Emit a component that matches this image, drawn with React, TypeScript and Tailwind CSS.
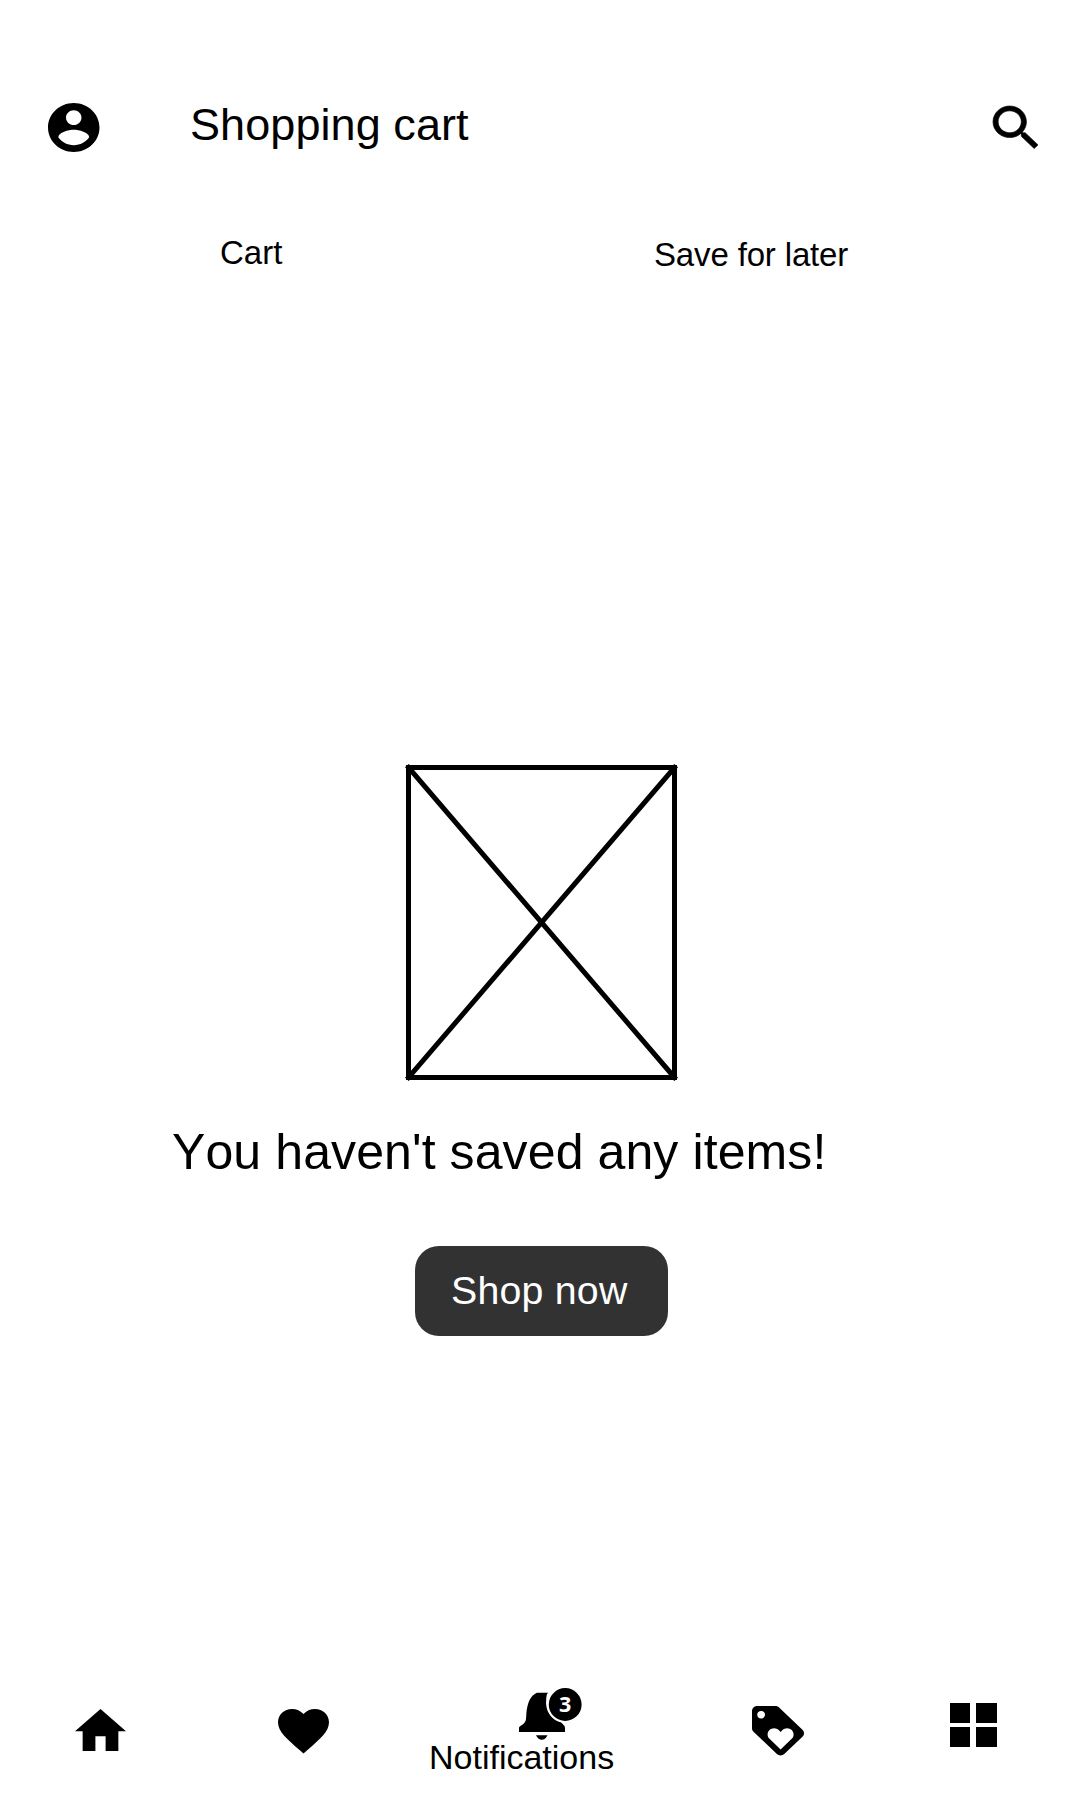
import React from "react";

type GlyphProps = {
  label: string;
  className: string;
  viewBox: string;
  children: React.ReactNode;
};

function Glyph({ label, className, viewBox, children }: GlyphProps) {
  return (
    <svg
      role="img"
      aria-label={label}
      className={`block shrink-0 overflow-visible fill-black ${className}`}
      viewBox={viewBox}
      preserveAspectRatio="none"
    >
      {children}
    </svg>
  );
}

function Header() {
  return (
    <header className="flex h-[190px] shrink-0 items-start pl-12">
      <Glyph label="Account" className="mt-[103px] h-[49px] w-[51.5px]" viewBox="2 2 20 20">
        <path d="M12 2C6.48 2 2 6.48 2 12s4.48 10 10 10 10-4.48 10-10S17.52 2 12 2zm0 3c1.66 0 3 1.34 3 3s-1.34 3-3 3-3-1.34-3-3 1.34-3 3-3zm0 14.2c-2.5 0-4.71-1.28-6-3.22.03-1.99 4-3.08 6-3.08 1.99 0 5.97 1.09 6 3.08-1.29 1.94-3.5 3.22-6 3.22z" />
      </Glyph>
      <h1 className="mt-[100px] ml-[90.5px] text-[45px] leading-[50px] tracking-[0.07px] whitespace-nowrap">Shopping cart</h1>
      <Glyph label="Search" className="mt-[106px] mr-[42px] ml-auto h-[42.5px] w-[45px]" viewBox="3 3 17.49 17.49">
        <path
          stroke="black"
          strokeWidth="0.25"
          d="M15.5 14h-.79l-.28-.27C15.41 12.59 16 11.11 16 9.5 16 5.91 13.09 3 9.5 3S3 5.91 3 9.5 5.91 16 9.5 16c1.61 0 3.09-.59 4.23-1.57l.27.28v.79l5 4.99L20.49 19l-4.99-5zm-6 0C7.01 14 5 11.99 5 9.5S7.01 5 9.5 5 14 7.01 14 9.5 11.99 14 9.5 14z"
        />
      </Glyph>
    </header>
  );
}

function Tabs() {
  return (
    <nav className="flex h-[110px] shrink-0 items-start pt-[43px] pl-[220px] text-[33px] leading-[40px] whitespace-nowrap">
      <button className="w-[434px] text-left">Cart</button>
      <button className="mt-0.5 tracking-[-0.15px]">Save for later</button>
    </nav>
  );
}

function EmptyState() {
  return (
    <main className="flex h-[1390px] shrink-0 flex-col items-start">
      <svg className="mt-[464px] ml-[405px] block h-[317px] w-[273px]" viewBox="0 0 273 317" fill="none" stroke="black" strokeWidth="5">
        <rect x="3.5" y="3.5" width="266" height="310" />
        <path d="M3.5 3.5 269.5 313.5M269.5 3.5 3.5 313.5" strokeWidth="5" strokeLinecap="square" />
      </svg>
      <p className="mt-[41px] ml-[172px] text-[50px] leading-[60px] tracking-[0.1px] whitespace-nowrap [font-kerning:none]">
        You haven't saved any items!
      </p>
      <button className="mt-[64px] ml-[415px] h-[90px] w-[253px] rounded-[24px] bg-[#323232] pb-0.5 pl-9 text-left text-[39.3px] tracking-[0.22px] whitespace-nowrap text-white">
        Shop now
      </button>
    </main>
  );
}

function BottomBar() {
  return (
    <footer className="flex h-[110px] shrink-0 items-start pl-[75px]">
      <Glyph label="Home" className="mt-[19px] h-[42px] w-[51px]" viewBox="2 3 20 17">
        <path d="M10 20v-6h4v6h5v-8h3L12 3 2 12h3v8z" />
      </Glyph>
      <Glyph label="Favorites" className="mt-[19px] ml-[152px] h-[44.5px] w-[51px]" viewBox="2 3 20 18.35">
        <path d="m12 21.35-1.45-1.32C5.4 15.36 2 12.28 2 8.5 2 5.42 4.42 3 7.5 3c1.74 0 3.41.81 4.5 2.09C13.09 3.81 14.76 3 16.5 3 19.58 3 22 5.42 22 8.5c0 3.78-3.4 6.86-8.55 11.54L12 21.35z" />
      </Glyph>
      <div className="ml-[100px] flex w-[185px] flex-col">
        <svg role="img" aria-label="3 notifications" className="mt-[-2px] ml-[89px] block h-[52px] w-[64px]" viewBox="517.500 1688 64 52">
          <path d="M518.500 1732v-4.500c1-2.500 6.500-3 7-8.500.5-5 .2-8 1.500-13 2-8 5.500-11.500 9.500-13.200h11c-1.800 2-1.500 4-1.800 6.500-1.500 12 5.800 20.500 14.500 22.700 2 2.500 4.300 3 4.300 6.500v3.500z" />
          <path d="M535.500 1735.200h11.500c-1.500 3-3.500 4.500-5.700 4.500s-4.300-1.500-5.800-4.500z" />
          <circle cx="564.700" cy="1704.500" r="18.300" fill="white" />
          <circle cx="564.700" cy="1704.500" r="16.400" />
          <text x="564.700" y="1712" textAnchor="middle" fontSize="21.500" fontWeight="bold" fontFamily="Open Sans, sans-serif" fill="white">3</text>
        </svg>
        <span className="mt-[-1px] text-[34px] leading-[36px] whitespace-nowrap">Notifications</span>
      </div>
      <Glyph label="Offers" className="mt-4 ml-[138px] h-[49.5px] w-[52px]" viewBox="2 2 20 20">
        <path d="m21.410 11.580-9-9C12.050 2.220 11.550 2 11 2H4c-1.100 0-2 .9-2 2v7c0 .55.220 1.050.590 1.420l9 9c.360.360.860.580 1.410.580s1.050-.220 1.410-.590l7-7c.370-.360.590-.860.590-1.410s-.230-1.060-.590-1.420zM5.500 7C4.670 7 4 6.330 4 5.500S4.670 4 5.500 4 7 4.670 7 5.500 6.330 7 5.500 7zm11.770 8.270L13 19.540l-4.270-4.270C8.280 14.810 8 14.190 8 13.500c0-1.380 1.120-2.500 2.500-2.500.690 0 1.320.280 1.770.740l.730.720.730-.730c.450-.450 1.080-.730 1.770-.730 1.380 0 2.500 1.120 2.500 2.500 0 .690-.280 1.320-.730 1.770z" />
      </Glyph>
      <div className="mt-[13px] ml-[146px] grid h-11 w-[47px] shrink-0 grid-cols-[20px_21px] grid-rows-[20px_20px] gap-x-1.5 gap-y-1">
        <span className="bg-black" />
        <span className="bg-black" />
        <span className="bg-black" />
        <span className="bg-black" />
      </div>
    </footer>
  );
}

export default function App() {
  return (
    <div className="flex h-[1800px] w-[1080px] flex-col overflow-hidden bg-white font-['Liberation_Sans',Arial,sans-serif] text-black">
      <Header />
      <Tabs />
      <EmptyState />
      <BottomBar />
    </div>
  );
}
